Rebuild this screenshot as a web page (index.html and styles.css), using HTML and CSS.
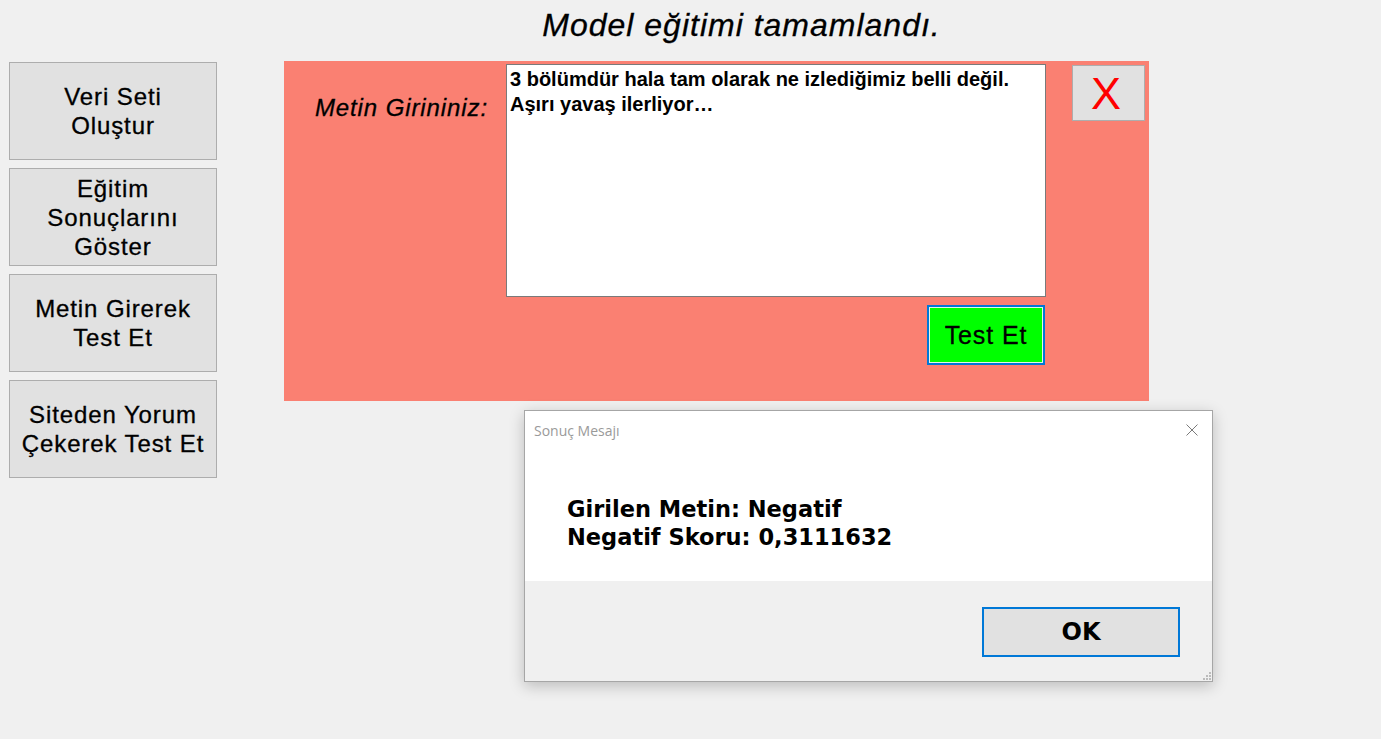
FILE: index.html
```html
<!DOCTYPE html>
<html lang="tr">
<head>
<meta charset="utf-8">
<title>Model eğitimi</title>
<link rel="stylesheet" href="styles.css">
</head>
<body>
<div class="title">Model eğitimi tamamlandı.</div>
<div class="main">
  <div class="sidebar">
    <button class="side-btn">Veri Seti<br>Oluştur</button>
    <button class="side-btn">Eğitim<br>Sonuçlarını<br>Göster</button>
    <button class="side-btn">Metin Girerek<br>Test Et</button>
    <button class="side-btn">Siteden Yorum<br>Çekerek Test Et</button>
  </div>
  <div class="panel">
    <div class="label">Metin Girininiz:</div>
    <div class="input-col">
      <div class="textbox">3 bölümdür hala tam olarak ne izlediğimiz belli değil.<br>Aşırı yavaş ilerliyor…</div>
      <div class="test-row"><button class="test-btn">Test Et</button></div>
    </div>
    <div class="close-col"><button class="x-btn">X</button></div>
  </div>
</div>

<div class="dialog">
  <div class="dlg-top">
    <div class="dlg-titlebar">
      <span class="dlg-title">Sonuç Mesajı</span>
      <svg class="dlg-close" width="12" height="12" viewBox="0 0 12 12"><path d="M0.5 0.5 L11.5 11.5 M11.5 0.5 L0.5 11.5" stroke="#7a7a7a" stroke-width="1" fill="none"/></svg>
    </div>
    <div class="dlg-msg">Girilen Metin: Negatif<br>Negatif Skoru: 0,3111632</div>
  </div>
  <div class="dlg-bottom">
    <button class="ok-btn">OK</button>
  </div>
  <svg class="grip" width="8" height="8" viewBox="0 0 8 8"><rect x="6" y="0" width="2" height="2" fill="#bcbcbc"/><rect x="3" y="3" width="2" height="2" fill="#bcbcbc"/><rect x="6" y="3" width="2" height="2" fill="#bcbcbc"/><rect x="0" y="6" width="2" height="2" fill="#bcbcbc"/><rect x="3" y="6" width="2" height="2" fill="#bcbcbc"/><rect x="6" y="6" width="2" height="2" fill="#bcbcbc"/></svg>
</div>
</body>
</html>
```

FILE: styles.css
```css
html, body {
  margin: 0;
  padding: 0;
  background: #f0f0f0;
  font-family: "Liberation Sans", Arial, sans-serif;
  color: #000;
}

.title {
  height: 61px;
  box-sizing: border-box;
  padding: 6px 0 0 102px;
  text-align: center;
  font-style: italic;
  font-size: 32px;
  line-height: 38px;
  letter-spacing: 1px;
  -webkit-text-stroke: 0.3px #000;
}

.main {
  display: flex;
  align-items: flex-start;
  padding-left: 9px;
}

.sidebar {
  display: flex;
  flex-direction: column;
  gap: 8px;
  width: 208px;
  margin-top: 1px;
}

.side-btn {
  height: 98px;
  width: 208px;
  background: #e1e1e1;
  border: 1px solid #adadad;
  font-family: "Liberation Sans", Arial, sans-serif;
  font-size: 24px;
  line-height: 29px;
  letter-spacing: 0.9px;
  -webkit-text-stroke: 0.3px #000;
  color: #000;
  padding: 0;
  margin: 0;
}

.panel {
  margin-left: 67px;
  width: 865px;
  height: 340px;
  background: #fa8072;
  display: flex;
  box-sizing: border-box;
  padding-top: 3px;
}

.label {
  width: 204px;
  text-align: right;
  padding-right: 18px;
  padding-top: 31px;
  font-style: italic;
  font-size: 24px;
  line-height: 26px;
  letter-spacing: 0.9px;
  -webkit-text-stroke: 0.3px #000;
}

.input-col {
  width: 540px;
  display: flex;
  flex-direction: column;
  gap: 8px;
}

.textbox {
  height: 233px;
  box-sizing: border-box;
  background: #fff;
  border: 1px solid #7a7a7a;
  padding: 2px 3px;
  font-weight: bold;
  font-size: 20px;
  line-height: 25px;
  white-space: nowrap;
  overflow: hidden;
}

.test-row {
  display: flex;
  justify-content: flex-end;
}

.test-btn {
  width: 118px;
  height: 60px;
  margin-right: 1px;
  background: #00ff00;
  border: 2px solid #0078d7;
  box-shadow: inset 0 0 0 1px #e8f4e8;
  font-family: "Liberation Sans", Arial, sans-serif;
  font-size: 25px;
  letter-spacing: 0.9px;
  -webkit-text-stroke: 0.3px #000;
  color: #000;
  padding: 0;
}

.close-col {
  padding-left: 26px;
  padding-top: 1px;
}

.x-btn {
  width: 73px;
  height: 56px;
  background: #e1e1e1;
  border: 1px solid #adadad;
  color: #ff0000;
  font-family: "Liberation Sans", Arial, sans-serif;
  font-size: 45px;
  line-height: 45px;
  padding: 0 5px 0 0;
}

.dialog {
  position: absolute;
  left: 524px;
  top: 410px;
  width: 689px;
  height: 272px;
  box-sizing: border-box;
  border: 1px solid #a6a6a6;
  background: #f0f0f0;
  box-shadow: 0 4px 14px rgba(0,0,0,0.22);
  display: flex;
  flex-direction: column;
}

.dlg-top {
  background: #fff;
  height: 170px;
}

.dlg-titlebar {
  height: 38px;
  display: flex;
  align-items: center;
  justify-content: space-between;
  padding: 0 9px 0 9px;
}

.dlg-title {
  font-family: "Open Sans", "Noto Sans", sans-serif;
  font-size: 14px;
  color: #9a9a9a;
}

.dlg-close {
  margin-right: 5px;
}

.dlg-msg {
  padding: 46px 0 0 42px;
  font-family: "DejaVu Sans", Verdana, sans-serif;
  font-weight: bold;
  font-size: 22.5px;
  line-height: 28px;
}

.dlg-bottom {
  flex: 1;
  display: flex;
  justify-content: flex-end;
  align-items: flex-start;
  padding: 26px 32px 0 0;
}

.ok-btn {
  width: 198px;
  height: 50px;
  background: #e1e1e1;
  border: 2px solid #0078d7;
  font-family: "DejaVu Sans", Verdana, sans-serif;
  font-weight: bold;
  font-size: 24px;
  color: #000;
  padding: 0;
}

.grip {
  position: absolute;
  right: 1px;
  bottom: 1px;
}
```
